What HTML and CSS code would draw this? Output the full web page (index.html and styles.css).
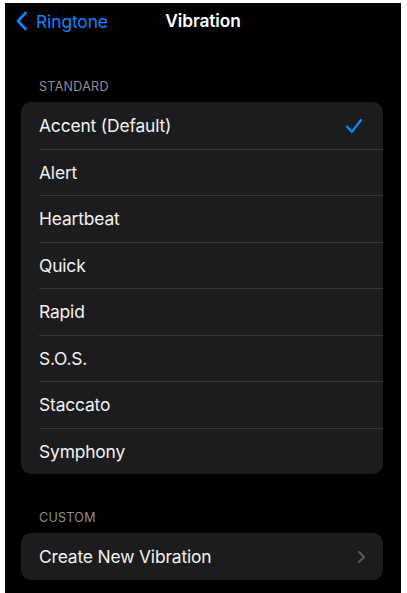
FILE: index.html
```html
<!DOCTYPE html>
<html lang="en">
<head>
  <meta charset="UTF-8">
  <meta name="viewport" content="width=device-width, initial-scale=1.0">
  <title>Vibration</title>
  <link rel="stylesheet" href="styles.css">
</head>
<body>
  <div class="screen">
    <div class="nav">
      <a class="back" href="#">
        <svg class="back-icon" width="13" height="20" viewBox="0 0 13 20">
          <path d="M10.5 2 L3 10 L10.5 18" fill="none" stroke="#0a84ff" stroke-width="2.6" stroke-linecap="round" stroke-linejoin="round"/>
        </svg>
        <span>Ringtone</span>
      </a>
      <div class="title">Vibration</div>
    </div>

    <div class="section-label">STANDARD</div>
    <ul class="group">
      <li class="row">
        <span>Accent (Default)</span>
        <svg class="check" width="18" height="16" viewBox="0 0 18 16">
          <path d="M2 8.5 L6.8 14 L16 2" fill="none" stroke="#0a84ff" stroke-width="2.2" stroke-linecap="round" stroke-linejoin="round"/>
        </svg>
      </li>
      <li class="row"><span>Alert</span></li>
      <li class="row"><span>Heartbeat</span></li>
      <li class="row"><span>Quick</span></li>
      <li class="row"><span>Rapid</span></li>
      <li class="row"><span>S.O.S.</span></li>
      <li class="row"><span>Staccato</span></li>
      <li class="row"><span>Symphony</span></li>
    </ul>

    <div class="section-label custom">CUSTOM</div>
    <ul class="group">
      <li class="row">
        <span>Create New Vibration</span>
        <svg class="chevron" width="9" height="14" viewBox="0 0 9 14">
          <path d="M2 2 L7 7 L2 12" fill="none" stroke="#5a5a5e" stroke-width="2" stroke-linecap="round" stroke-linejoin="round"/>
        </svg>
      </li>
    </ul>
  </div>
</body>
</html>
```

FILE: styles.css
```css
body {
  margin: 0;
  padding: 0;
  background-color: #fff;
  font-family: Inter, "Liberation Sans", Arial, sans-serif;
}
.screen {
  margin: 3px 6px 0 5px;
  height: 590px;
  background-color: #000;
  color: #fff;
  overflow: hidden;
}
.nav {
  position: relative;
  height: 36px;
  display: flex;
  align-items: center;
}
.back {
  display: flex;
  align-items: center;
  gap: 8px;
  padding-left: 10px;
  color: #0a84ff;
  text-decoration: none;
  font-size: 17.4px;
  letter-spacing: -0.1px;
}
.title {
  position: absolute;
  left: 0;
  right: 0;
  top: 0;
  line-height: 36px;
  text-align: center;
  font-size: 17.3px;
  font-weight: 600;
  letter-spacing: -0.1px;
  pointer-events: none;
}
.section-label {
  margin: 40px 0 0 34px;
  font-size: 12.5px;
  color: #8e8e93;
  letter-spacing: 0.3px;
  line-height: 16px;
}
.section-label.custom {
  margin-top: 36px;
}
.group {
  list-style: none;
  margin: 7px 18px 0 16px;
  padding: 0;
  background-color: #1c1c1e;
  border-radius: 10px;
  overflow: hidden;
}
.row {
  position: relative;
  height: 46.5px;
  display: flex;
  align-items: center;
  justify-content: space-between;
  padding: 1px 20px 0 18px;
  box-sizing: border-box;
  font-size: 17.4px;
  letter-spacing: -0.15px;
  color: #f2f2f2;
}
.row + .row::before {
  content: "";
  position: absolute;
  top: 0;
  left: 18px;
  right: 0;
  height: 1px;
  background-color: #38383a;
}
.chevron {
  margin-right: -3px;
}
```
